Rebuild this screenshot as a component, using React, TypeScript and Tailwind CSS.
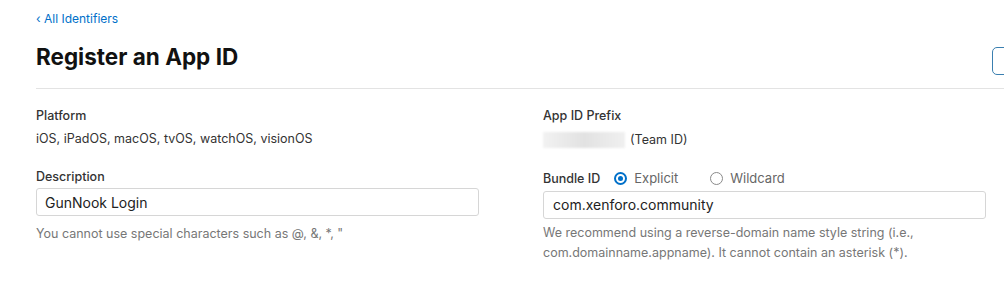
import React from "react";

const font = { fontFamily: "Inter, 'Liberation Sans', Arial, sans-serif" };

function Radio({ checked, label }: { checked?: boolean; label: string }) {
  return (
    <label className="flex items-center gap-[7px] text-[13px] text-[#666]">
      {checked ? (
        <span className="flex h-[13px] w-[13px] items-center justify-center rounded-full border-[2px] border-[#0070c9]">
          <span className="h-[5px] w-[5px] rounded-full bg-[#0070c9]" />
        </span>
      ) : (
        <span className="h-[13px] w-[13px] rounded-full border border-[#8a8a8a]" />
      )}
      {label}
    </label>
  );
}

export default function App() {
  return (
    <div className="h-[300px] w-[1004px] overflow-hidden bg-white text-[#333]" style={font}>
      <div className="pl-9">
        <a className="block pt-[11px] text-[12px] leading-[16px] text-[#0070c9]" href="#">
          ‹ All Identifiers
        </a>
        <div className="mt-[16px] flex h-[28px] items-center justify-between">
          <h1 className="text-[22.5px] font-bold leading-[28px] text-[#111]">Register an App ID</h1>
          <button className="mr-[-20px] h-[28px] w-[32px] translate-y-[4px] rounded-[5px] border border-[#3a7fb0]" type="button" />
        </div>
        <div className="mt-[17px] border-b border-[#e3e3e3]" />
        <div className="grid grid-cols-[443px_443px] gap-x-[64px] pt-[19px]">
          <div>
            <div className="text-[12.5px] font-medium leading-[16px] text-[#333]">Platform</div>
            <div className="mt-[7px] text-[12.5px] leading-[16px] text-[#333]">iOS, iPadOS, macOS, tvOS, watchOS, visionOS</div>
            <div className="mt-[22px] text-[12.5px] font-medium leading-[16px] text-[#333]">Description</div>
            <div className="mt-[3px] flex h-[28px] items-center rounded-[3px] border border-[#d6d6d6] px-[8px] text-[14px] text-[#222]">
              GunNook Login
            </div>
            <div className="mt-[10px] text-[12.5px] leading-[16px] text-[#777]">You cannot use special characters such as @, &amp;, *, "</div>
          </div>
          <div>
            <div className="text-[12.5px] font-medium leading-[16px] text-[#333]">App ID Prefix</div>
            <div className="mt-[8px] flex items-center gap-[5px] text-[12.5px] leading-[16px] text-[#333]">
              <span className="h-[16px] w-[82px] bg-gradient-to-r from-[#f2f2f2] via-[#e2e2e2] to-[#f0f0f0] blur-[1px]" />
              (Team ID)
            </div>
            <div className="mt-[21px] flex items-center">
              <span className="text-[12.5px] font-medium leading-[16px] text-[#333]">Bundle ID</span>
              <span className="w-[14px]" />
              <Radio checked label="Explicit" />
              <span className="w-[32px]" />
              <Radio label="Wildcard" />
            </div>
            <div className="mt-[2px] flex h-[28px] items-center rounded-[3px] border border-[#d6d6d6] px-[9px] text-[14px] text-[#222]">
              com.xenforo.community
            </div>
            <div className="mt-[4px] text-[12.5px] leading-[20px] text-[#777]">
              We recommend using a reverse-domain name style string (i.e.,
              <br />
              com.domainname.appname). It cannot contain an asterisk (*).
            </div>
          </div>
        </div>
      </div>
    </div>
  );
}
